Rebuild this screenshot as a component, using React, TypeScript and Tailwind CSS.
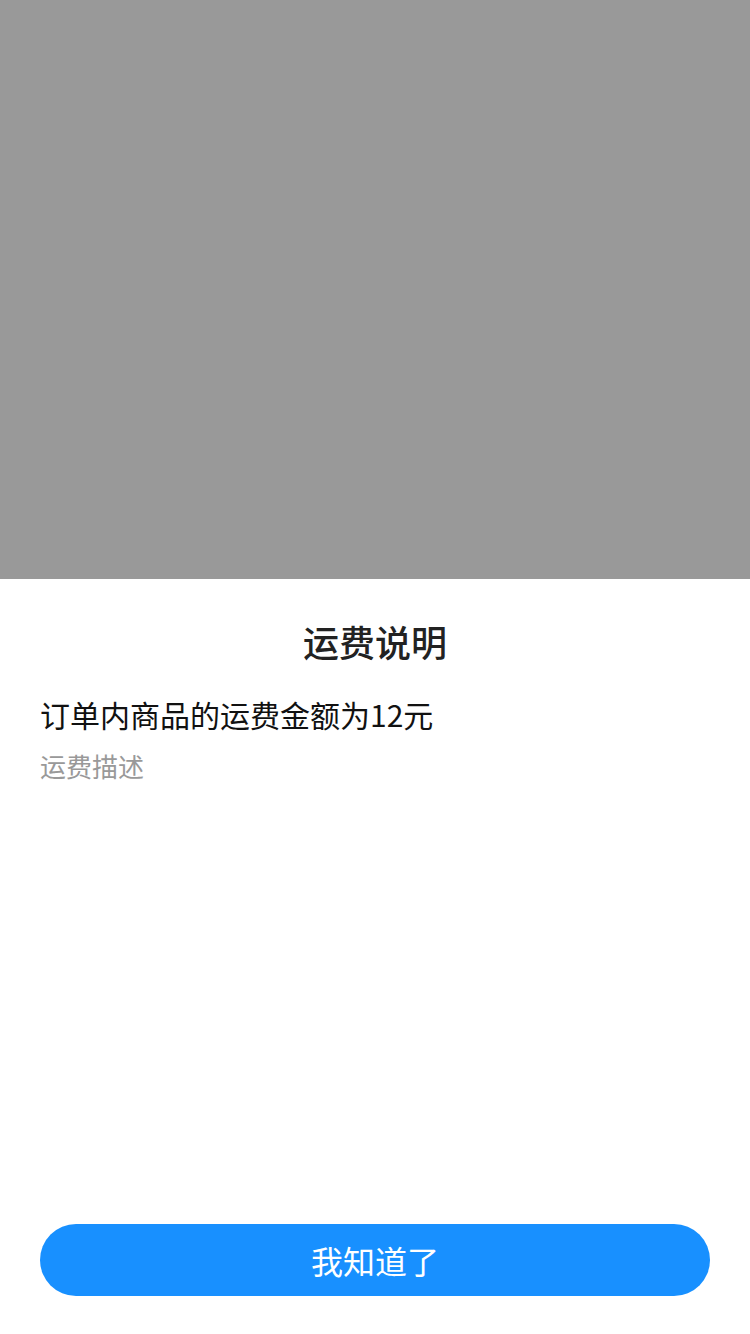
import React from "react";

export default function App() {
  const font = { fontFamily: '"PingFang SC", "Noto Sans CJK SC", "Noto Sans", sans-serif' };
  return (
    <div className="flex flex-col w-[750px] h-[1334px] bg-[#999999]" style={font}>
      <div className="h-[579px] shrink-0" />
      <div className="flex-1 flex flex-col bg-white px-[40px] pb-[38px]">
        <h2 className="pt-[42px] h-[103px] text-center text-[36px] leading-[40px] font-medium text-[#222222]">
          运费说明
        </h2>
        <p className="mt-[12px] text-[30px] leading-[40px] text-[#111111]">订单内商品的运费金额为12元</p>
        <p className="mt-[15px] text-[26px] leading-[34px] text-[#999999]">运费描述</p>
        <div className="flex-1" />
        <button className="h-[72px] w-full rounded-full bg-[#1890ff] text-white text-[32px]">
          我知道了
        </button>
      </div>
    </div>
  );
}
